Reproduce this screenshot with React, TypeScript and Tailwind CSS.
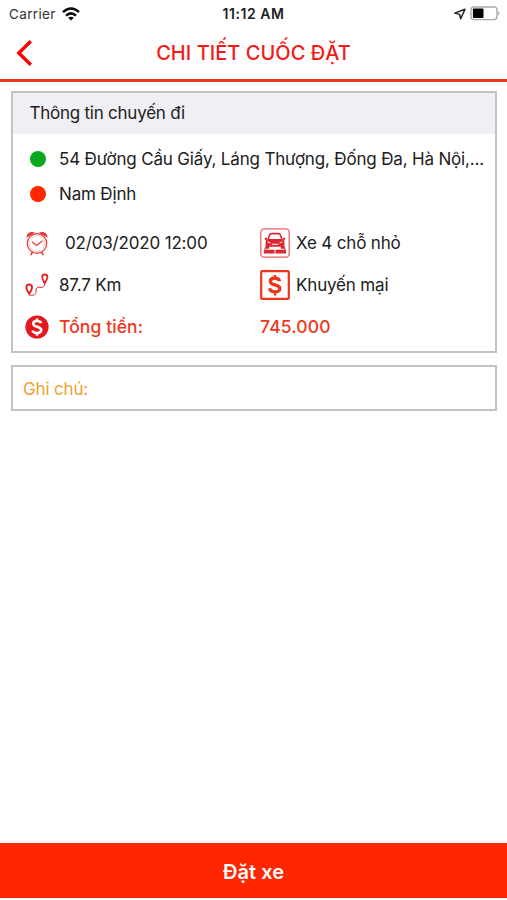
import type { ReactNode } from 'react';

function WifiIcon() {
  return (
    <svg width="18" height="14" viewBox="0 0 18 14" fill="none" stroke="#050505" strokeWidth="2.5">
      <path d="M1 5.1Q9-2.2 17 5.1" />
      <path d="M4 8.6Q9 4.2 14 8.6" />
      <path d="M9 13.6 6.1 10.8Q9 8.6 11.9 10.8Z" fill="#050505" stroke="none" />
    </svg>
  );
}

function LocationIcon() {
  return (
    <svg width="12" height="12" viewBox="0 0 12 12" fill="none" stroke="#222" strokeWidth="1.5" strokeLinejoin="round">
      <path d="M.8 5.1 11 1.2 6.7 10.8 5.6 6.4Z" />
    </svg>
  );
}

function BatteryIcon() {
  return (
    <svg width="31" height="15" viewBox="0 0 31 15">
      <rect x="1" y="1" width="26" height="12.6" rx="3" fill="#fff" stroke="#aaa" strokeWidth="1.4" />
      <rect x="2.9" y="2.6" width="10.6" height="9.4" rx="1" fill="#000" />
      <path d="M28.2 5Q30.8 7.3 28.2 9.6Z" fill="#aaa" />
    </svg>
  );
}

function AlarmIcon() {
  return (
    <svg width="24" height="26" viewBox="0 0 24 26" fill="none" stroke="#e5383b" strokeWidth="1.2" strokeLinecap="round">
      <circle cx="12" cy="13.5" r="9.8" />
      <circle cx="12" cy="13.5" r="8" strokeWidth=".5" opacity=".6" />
      <path d="M2.2 6.6C2.4 3.8 5.4 1.8 8.6 2.8Z" fill="#e5383b" />
      <path d="M21.8 6.6C21.6 3.8 18.6 1.8 15.4 2.8Z" fill="#e5383b" />
      <path d="M7.2 12.1 11.7 15.4 17.2 11" />
      <path d="M7.3 22.5 6 24.7M16.7 22.5 18 24.7" strokeWidth="1.5" />
    </svg>
  );
}

function RouteIcon() {
  return (
    <svg width="24" height="24" viewBox="0 0 24 24" fill="none" stroke="#e3262b">
      <path d="M4.2 20.8C2 17.2 1.4 15.6 1.4 14.2a2.8 2.8 0 0 1 5.6 0C7 15.6 6.4 17.2 4.2 20.8Z" strokeWidth="2" />
      <path d="M19.7 10.3C17.6 6.8 17.2 5.3 17.2 4.1a2.6 2.6 0 0 1 5.2 0C22.4 5.3 21.8 6.8 19.7 10.3Z" strokeWidth="1.8" />
      <path d="M4.5 21.9C8.3 23.1 11.1 21.7 11 18.3C10.9 15.4 11.7 13.7 14.5 14.3C17.7 15 19.7 13.8 19.6 10.8" strokeWidth="1" />
    </svg>
  );
}

function CoinIcon() {
  return (
    <svg width="24" height="24" viewBox="0 0 24 24" fill="none">
      <circle cx="12" cy="12" r="11.6" fill="#e3191e" />
      <path d="M16.1 8.2C15.2 5.2 8.2 5.2 8.2 8.8C8.2 12.5 16.2 11.2 16.2 15.1C16.2 18.9 8.4 18.9 7.5 15.5M12 3.4V6.4M12 17.5V20.7" stroke="#fff" strokeWidth="2.6" />
    </svg>
  );
}

function CarIcon() {
  return (
    <svg width="30" height="30" viewBox="0 0 30 30" fill="none" stroke="#dc2630">
      <rect x=".8" y=".8" width="28.4" height="28.4" rx="3.5" stroke="#e7656b" strokeWidth="1.3" />
      <path d="M8 11.5 9.8 6.6Q10.1 5.6 11.2 5.6H18.8Q19.9 5.6 20.2 6.6L22 11.5" strokeWidth="1.6" />
      <path d="M4.8 10.7H7M23 10.7H25.2" strokeWidth="2" />
      <path d="M5.6 13.3Q6 11 8 11H22Q24 11 24.4 13.3V20.7H20.8V18.8H9.2V20.7H5.6Z" fill="#dc2630" stroke="none" />
      <path d="M7.5 13.8 10.5 15M22.5 13.8 19.5 15M11.8 16.3H18.2" stroke="#fff" strokeWidth="1" />
      <path d="M5 18.5 3.6 25.4H26.4L25 18.5H24.4V21.7H5.6V18.5Z" fill="#dc2630" stroke="none" />
      <path d="M15 21.7V25.4" stroke="#fff" strokeWidth=".9" />
    </svg>
  );
}

function PromoIcon() {
  return (
    <svg width="30" height="30" viewBox="0 0 30 30" fill="none">
      <rect x="1.2" y="1.2" width="27.6" height="27.6" rx=".7" stroke="#ee351c" strokeWidth="2.2" />
      <path d="M19.5 11.2C18.8 7.2 10.3 7.2 10.3 11.4C10.3 15.9 19.9 13.8 19.9 18.6C19.9 23.2 10.4 22.9 9.6 18.3" stroke="#ee351c" strokeWidth="3.3" />
      <path d="M15 5V9M15 21V25.4" stroke="#ee351c" strokeWidth="2.3" />
    </svg>
  );
}

function IconSlot({ children }: { children: ReactNode }) {
  return <span className="flex w-6 shrink-0 justify-center">{children}</span>;
}

export default function App() {
  return (
    <div className="flex h-[900px] w-[507px] flex-col overflow-hidden bg-white font-['Inter',sans-serif] text-[17px] leading-6 tracking-[-0.17px] text-[#202020]">
      <div className="grid h-7 shrink-0 grid-cols-[1fr_auto_1fr] items-center px-[9px] text-[13.5px] leading-none">
        <div className="flex items-center gap-[6px]">
          <span className="pt-px tracking-[0.35px] text-[#333]">Carrier</span>
          <WifiIcon />
        </div>
        <span className="text-center text-[14px] font-semibold tracking-[0.55px]">11:12 AM</span>
        <div className="-mr-[3px] -mt-px flex items-center justify-end gap-[4px]">
          <LocationIcon />
          <BatteryIcon />
        </div>
      </div>

      <header className="grid h-[54px] shrink-0 grid-cols-[48px_1fr_48px] items-center border-b-[3px] border-[#e63a1c] pb-px text-[#f21b18]">
        <button className="pb-px pl-[15px]" aria-label="Quay lại">
          <svg width="17" height="28" viewBox="0 0 17 28" fill="none" stroke="#fa0000" strokeWidth="3.4">
            <path d="M15.8 2.3 3.8 14 15.8 25.7" />
          </svg>
        </button>
        <h1 className="text-center text-[20px] font-medium tracking-[0.04px]">CHI TIẾT CUỐC ĐẶT</h1>
      </header>

      <section className="ml-[11px] mr-[10px] mt-[9px] h-[262px] shrink-0 border-2 border-[#c3c3c3]">
        <h2 className="flex h-[41px] items-center bg-[#efeff4] pb-[2px] pl-[16.5px] tracking-[-0.24px]">Thông tin chuyến đi</h2>
        <div className="flex flex-col gap-3 pl-[17px] pt-[13px]">
          <div className="flex items-center gap-[10px]">
            <span className="h-4 w-4 shrink-0 rounded-full bg-[#08a91e]" />
            <span className="ml-[3px] whitespace-nowrap">54 Đường Cầu Giấy, Láng Thượng, Đống Đa, Hà Nội,...</span>
          </div>
          <div className="-mt-px flex items-center gap-[10px]">
            <span className="h-4 w-4 shrink-0 rounded-full bg-[#ff2600]" />
            <span className="ml-[3px]">Nam Định</span>
          </div>
        </div>
        <div className="mt-4 grid grid-cols-[235px_1fr] grid-rows-[42px_42px_42px] items-center pl-3">
          <div className="flex items-center gap-4">
            <IconSlot><AlarmIcon /></IconSlot>
            <span>02/03/2020 12:00</span>
          </div>
          <div className="flex items-center gap-[6px]">
            <CarIcon />
            <span>Xe 4 chỗ nhỏ</span>
          </div>
          <div className="flex items-center gap-[10px]">
            <IconSlot><RouteIcon /></IconSlot>
            <span>87.7 Km</span>
          </div>
          <div className="flex items-center gap-[6px]">
            <PromoIcon />
            <span>Khuyến mại</span>
          </div>
          <div className="flex items-center gap-[10px] font-medium text-[#ee381c]">
            <IconSlot><CoinIcon /></IconSlot>
            <span className="text-[17.5px] tracking-[0.1px]">Tổng tiền:</span>
          </div>
          <span className="text-[17.5px] font-medium tracking-[0.15px] text-[#ee381c]">745.000</span>
        </div>
      </section>

      <div className="ml-[11px] mr-[10px] mt-[12px] flex h-[46px] shrink-0 items-center border-2 border-[#c3c3c3] pl-[10px] pt-px text-[#eda133]">
        Ghi chú:
      </div>

      <button className="mb-[2px] mt-auto h-[55px] shrink-0 bg-[#ff2600] pt-[3px] text-[20px] font-semibold tracking-[0.03px] text-white">
        Đặt xe
      </button>
    </div>
  );
}
